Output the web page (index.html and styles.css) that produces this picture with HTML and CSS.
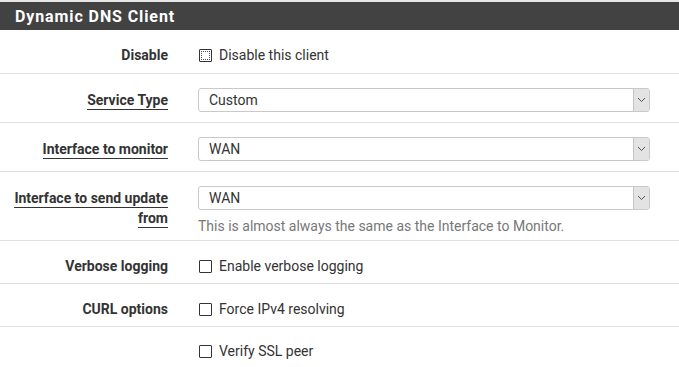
FILE: index.html
```html
<!DOCTYPE html>
<html>
<head>
<meta charset="utf-8">
<link rel="stylesheet" href="styles.css">
</head>
<body>
<div class="panel">
  <div class="panel-heading">Dynamic DNS Client</div>
  <div class="panel-body">
    <div class="row row-short row-first">
      <div class="label"><span>Disable</span></div>
      <div class="control">
        <label class="check"><span class="box box-focus"></span>Disable this client</label>
      </div>
    </div>
    <div class="row">
      <div class="label"><span class="req">Service Type</span></div>
      <div class="control">
        <div class="select"><span class="value">Custom</span><span class="arrow"><svg width="9" height="6" viewBox="0 0 9 6"><path d="M1 1 L4.5 4.5 L8 1" fill="none" stroke="#555" stroke-width="1"/></svg></span></div>
      </div>
    </div>
    <div class="row">
      <div class="label"><span class="req">Interface to monitor</span></div>
      <div class="control">
        <div class="select"><span class="value">WAN</span><span class="arrow"><svg width="9" height="6" viewBox="0 0 9 6"><path d="M1 1 L4.5 4.5 L8 1" fill="none" stroke="#555" stroke-width="1"/></svg></span></div>
      </div>
    </div>
    <div class="row row-help">
      <div class="label"><span class="req">Interface to send update</span><br><span class="req">from</span></div>
      <div class="control">
        <div class="select"><span class="value">WAN</span><span class="arrow"><svg width="9" height="6" viewBox="0 0 9 6"><path d="M1 1 L4.5 4.5 L8 1" fill="none" stroke="#555" stroke-width="1"/></svg></span></div>
        <div class="help">This is almost always the same as the Interface to Monitor.</div>
      </div>
    </div>
    <div class="row row-short">
      <div class="label"><span>Verbose logging</span></div>
      <div class="control">
        <label class="check"><span class="box"></span>Enable verbose logging</label>
      </div>
    </div>
    <div class="row row-short">
      <div class="label"><span>CURL options</span></div>
      <div class="control">
        <label class="check"><span class="box"></span>Force IPv4 resolving</label>
      </div>
    </div>
    <div class="row row-short row-last">
      <div class="label"></div>
      <div class="control">
        <label class="check"><span class="box"></span>Verify SSL peer</label>
      </div>
    </div>
  </div>
</div>
</body>
</html>
```

FILE: styles.css
```css
html, body {
  margin: 0;
  padding: 0;
  background: #ffffff;
}
body {
  font-family: Roboto, "Liberation Sans", sans-serif;
  color: #333333;
  font-size: 14px;
}
.panel {
  border-top: 2px solid #e6e6e6;
}
.panel-heading {
  background: #424242;
  color: #ffffff;
  font-weight: bold;
  font-size: 16px;
  height: 28px;
  line-height: 29px;
  padding-left: 15px;
  letter-spacing: 0.9px;
}
.row {
  display: flex;
  align-items: flex-start;
  border-bottom: 1px solid #e0e0e0;
  padding: 14px 0 10px 0;
  min-height: 24px;
}
.row-short {
  padding: 15px 0 7px 0;
  min-height: 20px;
}
.row-first {
  padding-bottom: 8px;
}
.row-help {
  padding: 14px 0 4px 0;
}
.row-last {
  border-bottom: none;
  padding-top: 14px;
}
.label {
  width: 168px;
  flex: none;
  text-align: right;
  font-weight: bold;
  font-size: 14px;
  line-height: 20px;
  color: #333333;
  padding-top: 2px;
}
.row-short .label {
  padding-top: 0;
}
.label .req {
  border-bottom: 1px solid #333333;
  padding-bottom: 1px;
}
.control {
  margin-left: 30px;
  width: 452px;
}
.check {
  display: flex;
  align-items: center;
  height: 20px;
  font-size: 14px;
  color: #333333;
}
.box {
  width: 11px;
  height: 11px;
  border: 1px solid #333333;
  border-radius: 1px;
  margin: 0 7px 0 1px;
  background: #fff;
  position: relative;
}
.box-focus::after {
  content: "";
  position: absolute;
  left: 1px;
  top: 1px;
  right: 1px;
  bottom: 1px;
  border: 1px dotted #555;
}
.select {
  display: flex;
  align-items: stretch;
  height: 22px;
  border: 1px solid #c9c9c9;
  border-radius: 3px;
  background: #ffffff;
}
.select .value {
  flex: 1;
  padding-left: 10px;
  line-height: 22px;
  font-size: 14px;
  color: #333333;
}
.select .arrow {
  width: 15px;
  background: #e3e3e3;
  border-left: 1px solid #c4c4c4;
  border-radius: 0 2px 2px 0;
  display: flex;
  align-items: center;
  justify-content: center;
}
.help {
  color: #777777;
  font-size: 14px;
  margin-top: 6px;
  line-height: 20px;
}
```
